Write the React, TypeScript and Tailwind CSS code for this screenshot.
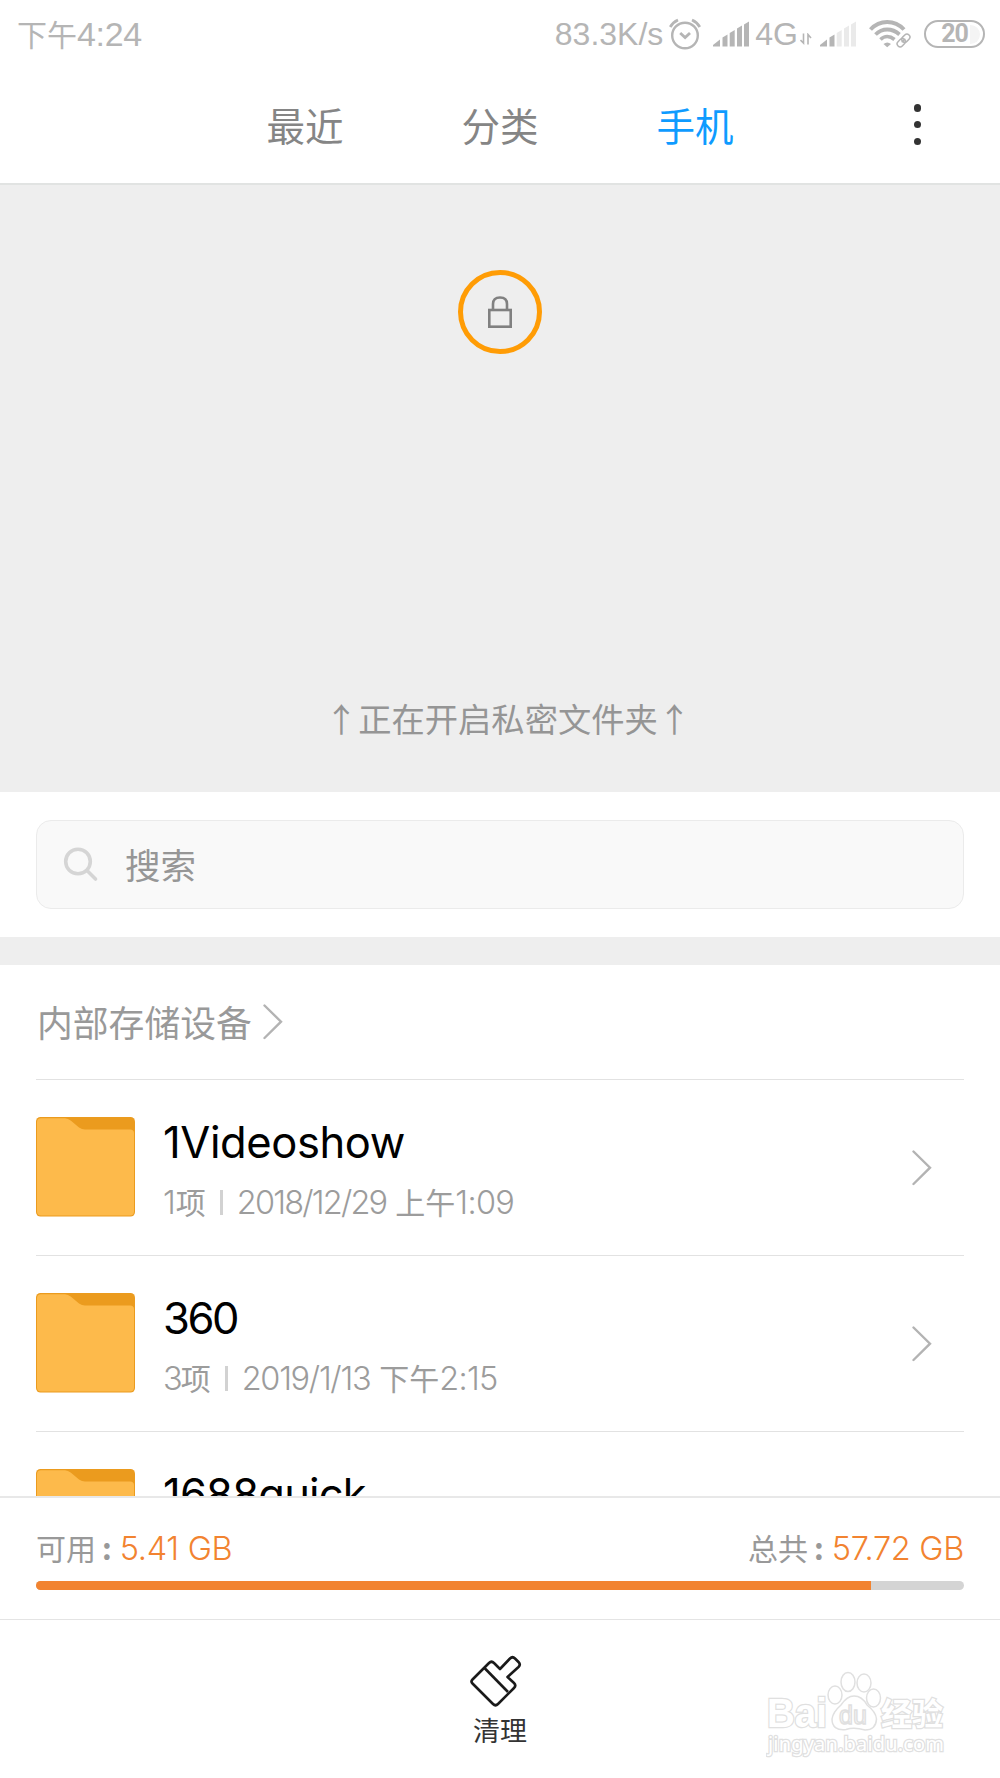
import type { ReactNode } from 'react';
import clsx from 'clsx';

interface FolderMeta {
  count: string;
  date: string;
  period: string;
  time: string;
}

interface FolderItem {
  name: string;
  meta?: FolderMeta;
  /** Letter spacing classes, tuned per label. */
  nameClass: string;
  countClass?: string;
  dateClass?: string;
}

const folders: FolderItem[] = [
  {
    name: '1Videoshow',
    meta: { count: '1', date: '2018/12/29', period: '上午', time: '1:09' },
    nameClass: 'tracking-[-0.4px]',
    dateClass: 'tracking-[-1.8px]',
  },
  {
    name: '360',
    meta: { count: '3', date: '2019/1/13', period: '下午', time: '2:15' },
    nameClass: 'tracking-[-2.4px]',
    countClass: 'tracking-[-2px]',
    dateClass: 'tracking-[-1.3px]',
  },
  {
    name: '1688quick',
    nameClass: 'tracking-[-0.8px]',
  },
];

const tabs = ['最近', '分类', '手机'];

const Latin = ({ className, children }: { className?: string; children: ReactNode }) => (
  <span className={clsx("font-['Inter',sans-serif] font-light", className)}>{children}</span>
);

const AlarmIcon = () => (
  <svg width="32" height="32" viewBox="0 0 32 32" fill="none" stroke="#b5b5b5" strokeWidth="2.4">
    <circle cx="16" cy="17.5" r="12.8" />
    <path d="M11.2 15l4.9 4.6 4.9-4.6" strokeWidth="2.8" />
    <path d="M1.2 9Q4 4.2 9 2M30.8 9Q28 4.2 23 2" strokeWidth="2.8" />
  </svg>
);

/** Five bars; the first `level` ones are lit. */
const SignalIcon = ({ level }: { level: number }) => (
  <svg width="36" height="26" viewBox="0 0 36 26">
    {[
      'M0 25.5V24l7-5.5v7z',
      'M9.5 25.5V16.5l5-3v12z',
      'M16.7 25.5V12l5-3v16.5z',
      'M24 25.5V7.5l5-3v21z',
      'M31 25.5V3.500l5-3v25z',
    ].map((d, i) => (
      <path key={d} d={d} fill={i < level ? '#b5b5b5' : '#eaeaea'} />
    ))}
  </svg>
);

const DataArrows = () => (
  <svg width="12" height="12" viewBox="0 0 12 12" fill="none" stroke="#b5b5b5" strokeWidth="1.6">
    <path d="M.5 7L3.500 10V.5M8 11.5V1.5l3 3.5" />
  </svg>
);

const WifiIcon = () => (
  <svg width="42" height="30" viewBox="0 0 42 30" fill="none" stroke="#b5b5b5">
    <path d="M1.5 10.500Q8.500 3 18.200 3T35 10.500" strokeWidth="4" />
    <path d="M6.500 15.500Q11.500 10.500 18.200 10.500T30.500 15.500" strokeWidth="3.8" />
    <path d="M11.500 20.500Q14.500 17.500 18.200 17.500T25.500 20.500" strokeWidth="3.6" />
    <path d="M14.500 25Q18.200 21.800 22 25l-3.800 3.300z" fill="#b5b5b5" stroke="none" />
    <g strokeWidth="1.5" transform="rotate(-45 34.5 21.5)">
      <rect x="26.8" y="18.5" width="9" height="6" rx="3" fill="#fff" />
      <rect x="33.3" y="18.5" width="9" height="6" rx="3" />
      <path d="M32 21.5h5" />
    </g>
  </svg>
);

const Battery = () => (
  <div className="relative flex h-[28px] w-[61px] items-center justify-center rounded-full border-[2.5px] border-[#b5b5b5]">
    <div className="absolute inset-y-[2.5px] right-[3px] w-[10px] rounded-r-full bg-[#f4f4f4]" />
    <span className="relative -mt-px font-['Roboto',sans-serif] text-[25px] leading-none font-bold tracking-[-1px] text-[#b5b5b5]">
      20
    </span>
  </div>
);

const StatusBar = () => (
  <header className="flex h-[68px] items-center pr-[15px] pl-[17px] text-[#b5b5b5]">
    <div className="flex items-center leading-none">
      <span className="-mt-[3px] text-[30px]">下午</span>
      <span className="font-['Liberation_Sans',sans-serif] text-[34px] tracking-[-0.3px]">4:24</span>
    </div>
    <div className="ml-auto flex items-center font-['Liberation_Sans',sans-serif] text-[32px] leading-none">
      <span className="mr-[6px]">83.3K/s</span>
      <AlarmIcon />
      <div className="mr-[6px] ml-[12px]">
        <SignalIcon level={5} />
      </div>
      <span className="mr-[2px]">4G</span>
      <div className="mt-[10px] mr-[8px]">
        <DataArrows />
      </div>
      <SignalIcon level={2} />
      <div className="mr-[13px] ml-[13px]">
        <WifiIcon />
      </div>
      <Battery />
    </div>
  </header>
);

const TabBar = () => (
  <nav className="relative flex h-[117px] justify-center gap-[118px] border-b-2 border-[#e1e3e2] pt-[28px] text-[38.5px] leading-[56px]">
    {tabs.map((tab) => (
      <span key={tab} className={tab === '手机' ? 'text-[#0e9bff]' : 'text-[#858585]'}>
        {tab}
      </span>
    ))}
    <div className="absolute top-[36px] right-[79px] flex flex-col gap-[9.3px]">
      <i className="size-[7.5px] rounded-full bg-[#333]" />
      <i className="size-[7.5px] rounded-full bg-[#333]" />
      <i className="size-[7.5px] rounded-full bg-[#333]" />
    </div>
  </nav>
);

const PrivateFolderPanel = () => (
  <section className="flex h-[607px] flex-col items-center bg-[#eee] pt-[85px]">
    <div className="flex size-[84px] items-center justify-center rounded-full border-[5px] border-[#ff9c05]">
      <svg width="24" height="32" viewBox="0 0 24 32" fill="none" stroke="#808080" strokeWidth="2.6">
        <rect x="1.3" y="14" width="21.4" height="16.7" />
        <path d="M5 13.5V8Q5 1.5 12 1.5T19 8v5.5" />
      </svg>
    </div>
    <p className="mt-[339px] pl-[16px] text-[33.3px] leading-[50px] whitespace-nowrap text-[#959595]">
      ↑正在开启私密文件夹↑
    </p>
  </section>
);

const SearchBox = () => (
  <section className="h-[145px] px-[36px] pt-[28px]">
    <div className="flex h-[89px] items-center rounded-[15px] border-[1.5px] border-[#ebebeb] bg-[#f9f9f9] pl-[26px]">
      <svg width="36" height="36" viewBox="0 0 36 36" fill="none" stroke="#d5d5d5" strokeWidth="3.6">
        <circle cx="15" cy="14.5" r="12.3" />
        <path d="M24 23.5l8.5 8.5" strokeLinecap="round" />
      </svg>
      <span className="-mt-[2px] ml-[26px] text-[35.5px] leading-[50px] text-[#969696]">搜索</span>
    </div>
  </section>
);

const Chevron = () => (
  <svg width="20" height="36" viewBox="0 0 20 36" fill="none" stroke="#b3b3b3" strokeWidth="2.4">
    <path d="M1.5 1.5L18 17.7 1.5 34" strokeLinecap="round" />
  </svg>
);

const FolderIcon = () => (
  <svg width="99" height="100" viewBox="0 0 99 100" className="-mt-px shrink-0">
    <rect width="99" height="99.5" rx="4.5" fill="#eb9b1e" />
    <path
      d="M1 5Q1 1.200 5 1.200H29Q32 1.200 35 3.800L43 10.500Q46 12.500 49 12.500H94Q98 12.500 98 16V94.500Q98 98.500 94 98.500H5Q1 98.500 1 94.500z"
      fill="#fdba4b"
    />
  </svg>
);

const FolderRow = ({ item }: { item: FolderItem }) => (
  <li className="flex h-[176px] items-center border-t-[1.5px] border-[#e2e2e2] pr-[32px]">
    <FolderIcon />
    <div className="ml-[28px] h-[130px] flex-1 pt-[9px]">
      <h2
        className={clsx(
          "font-['Inter',sans-serif] text-[43.5px] leading-[60px] font-normal text-black",
          item.nameClass,
        )}
      >
        {item.name}
      </h2>
      {item.meta && (
        <div className="flex h-[62px] items-center text-[32.5px] leading-[40px] text-[#9c9c9c]">
          <Latin className={item.countClass}>{item.meta.count}</Latin>
          <span className="-mt-[3px] text-[30px]">项</span>
          <i className="mx-[14px] h-[25px] w-[3px] bg-[#d2d2d2]" />
          <Latin className={item.dateClass}>{item.meta.date}</Latin>
          <span className="-mt-[3px] ml-[9px] text-[30px]">{item.meta.period}</span>
          <Latin className="tracking-[-0.7px]">{item.meta.time}</Latin>
        </div>
      )}
    </div>
    <Chevron />
  </li>
);

const StorageLabel = ({ label, value }: { label: string; value: string }) => (
  <span className="flex items-center">
    <span className="-mt-[5px]">{label}</span>
    <span className="mr-[8px] ml-[6px] -mt-[5px] font-bold">:</span>
    <Latin className="text-[32.5px] tracking-[-0.3px] text-[#f28330]">{value}</Latin>
  </span>
);

const StorageBar = () => (
  <section className="h-[123px] border-t-2 border-[#e8e8e8] bg-white px-[36px] pt-[30px]">
    <div className="flex h-[42px] items-center justify-between text-[30px] leading-[42px] whitespace-nowrap text-[#999]">
      <StorageLabel label="可用" value="5.41 GB" />
      <StorageLabel label="总共" value="57.72 GB" />
    </div>
    <div className="mt-[11px] h-[8.5px] overflow-hidden rounded-full bg-[#d4d4d4]">
      <div className="h-full w-[90%] bg-[#f28330]" />
    </div>
  </section>
);

const Watermark = () => (
  <svg
    className="absolute right-[50px] bottom-[15px]"
    width="184"
    height="94"
    viewBox="0 0 184 94"
    fill="#fff"
    stroke="#e0e0e0"
    strokeWidth="1.5"
  >
    <g style={{ paintOrder: 'stroke' }} strokeWidth="2.5">
      <text x="1" y="58" fontFamily="Liberation Sans" fontWeight="700" fontSize="40" textLength="60" lengthAdjust="spacingAndGlyphs">
        Bai
      </text>
      <text x="115" y="56" fontFamily="Noto Sans CJK SC" fontWeight="700" fontSize="31">
        经验
      </text>
      <text x="2" y="82" fontFamily="Noto Sans, sans-serif" fontWeight="400" fontSize="20" textLength="176">
        jingyan.baidu.com
      </text>
    </g>
    <ellipse cx="69" cy="26" rx="7" ry="9" />
    <ellipse cx="82" cy="13" rx="7" ry="9.5" />
    <ellipse cx="98" cy="14" rx="7" ry="9" />
    <ellipse cx="107.5" cy="29" rx="7" ry="9" />
    <path d="M88 27Q96 27 101 36Q110 43 110.500 50Q110 61 99 61Q88 58 80 60.500Q66 62 66 50Q67 43 75 36Q81 27 88 27z" />
    <text x="73" y="55" fontFamily="Liberation Sans" fontWeight="400" fontSize="25" textLength="28">
      du
    </text>
  </svg>
);

const CleanAction = () => (
  <footer className="relative flex h-[159px] flex-col items-center border-t-[1.5px] border-[#e4e4e4] bg-white pt-[35px]">
    <svg
      className="mr-[8px]"
      width="52"
      height="52"
      viewBox="0 0 52 52"
      fill="none"
      stroke="#1a1a1a"
      strokeWidth="2.6"
      strokeLinejoin="round"
    >
      <path d="M2.500 24.500L19 8Q21.500 5.500 24 8L30 14L40 3.500Q42.500 1 45 3.500L48.500 7Q51 9.500 48.500 12L37.500 22L44 28Q46.500 30.500 44 33L28 49Q25.500 51.500 23 49L2.500 28.500Q.5 26.500 2.500 24.500z" />
      <path d="M14.500 13L38 37" />
    </svg>
    <span className="mt-[3px] text-[27px] leading-[40px] text-[#333]">清理</span>
    <Watermark />
  </footer>
);

export default function App() {
  return (
    <div className="flex h-[1778px] w-[1000px] flex-col overflow-hidden bg-white font-['Noto_Sans_CJK_SC',sans-serif]">
      <StatusBar />
      <TabBar />
      <PrivateFolderPanel />
      <SearchBox />
      <div className="h-[28px] bg-[#eee]" />
      <main className="h-[531px] overflow-hidden px-[36px]">
        <div className="flex h-[114px] items-center gap-[11px] pl-px text-[35.8px] leading-[50px] text-[#999]">
          <span className="-mt-[3px]">内部存储设备</span>
          <Chevron />
        </div>
        <ul>
          {folders.map((item) => (
            <FolderRow key={item.name} item={item} />
          ))}
        </ul>
      </main>
      <StorageBar />
      <CleanAction />
    </div>
  );
}
